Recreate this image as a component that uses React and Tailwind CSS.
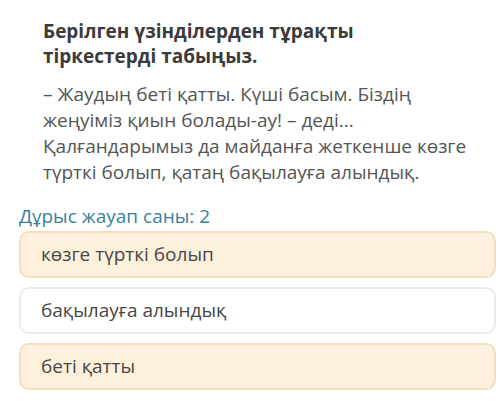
import React from "react";

const options = [
  { text: "көзге түрткі болып", picked: true },
  { text: "бақылауға алындық", picked: false },
  { text: "беті қатты", picked: true },
];

export default function App() {
  return (
    <div
      className="w-[500px] h-[401px] bg-white overflow-hidden"
      style={{ fontFamily: '"Open Sans", "Noto Sans", sans-serif' }}
    >
      {/* QUESTION */}
      <div className="pt-[19px] pl-[43px] pr-[20px]">
        <h1 className="text-[19px] leading-[25px] font-bold text-[#3b3b3b]">
          Берілген үзінділерден тұрақты
          <br />
          тіркестерді табыңыз.
        </h1>
        <p className="mt-[12px] text-[19px] leading-[26px] text-[#555555]">
          – Жаудың беті қатты. Күші басым. Біздің жеңуіміз қиын болады-ау! –
          деді... Қалғандарымыз да майданға жеткенше көзге түрткі болып, қатаң
          бақылауға алындық.
        </p>
      </div>

      {/* ANSWERS */}
      <div className="mt-[19px] pl-[19px] pr-[4px]">
        <div className="text-[19px] leading-[25px] text-[#3a7f9e]">
          Дұрыс жауап саны: 2
        </div>
        <div className="mt-[2px] flex flex-col gap-[9px]">
          {options.map((o) => (
            <div
              key={o.text}
              className={`h-[47px] flex items-center pl-[20px] rounded-[10px] border-2 text-[19px] text-[#474747] ${
                o.picked
                  ? "bg-[#fdf1de] border-[#f2dfbd]"
                  : "bg-white border-[#ececec]"
              }`}
            >
              {o.text}
            </div>
          ))}
        </div>
      </div>
    </div>
  );
}
